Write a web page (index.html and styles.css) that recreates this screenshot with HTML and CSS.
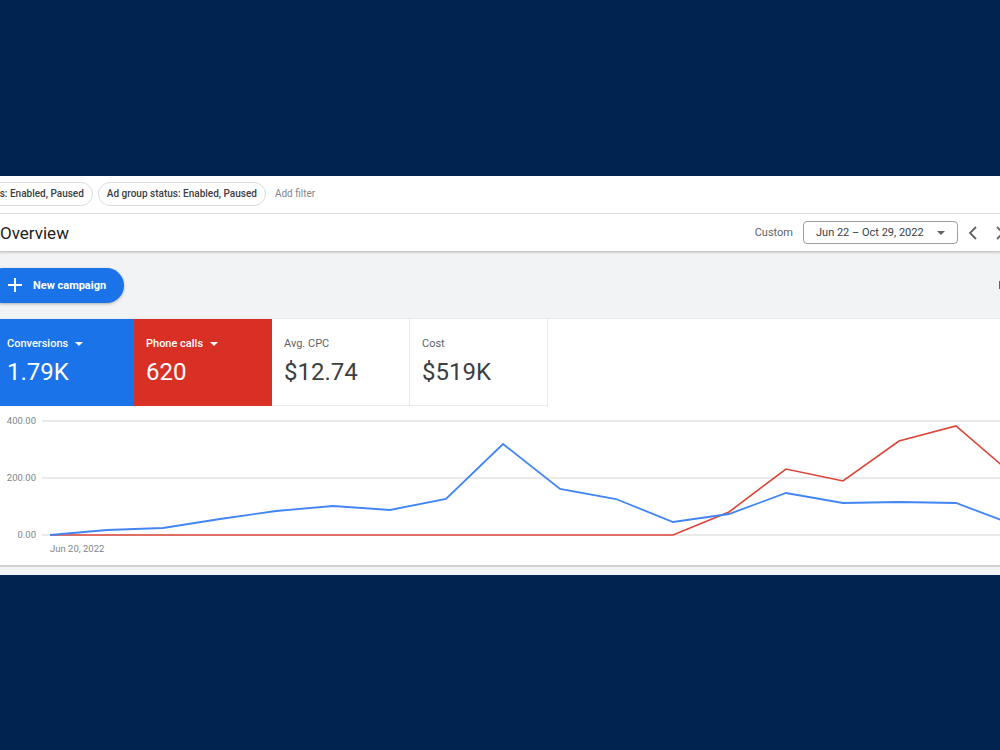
FILE: index.html
```html
<!DOCTYPE html>
<html lang="en">
<head>
  <meta charset="UTF-8">
  <title>Overview</title>
  <link rel="stylesheet" href="styles.css">
</head>
<body>
  <div class="panel">
    <div class="filters">
      <span class="chip">Campaign status: Enabled, Paused</span>
      <span class="chip">Ad group status: Enabled, Paused</span>
      <span class="add-filter">Add filter</span>
    </div>

    <div class="header">
      <h1>Overview</h1>
      <div class="range">
        <span class="custom">Custom</span>
        <div class="date-box">
          <span>Jun 22 – Oct 29, 2022</span>
          <span class="caret"></span>
        </div>
        <svg class="nav" width="24" height="24" viewBox="0 0 24 24"><path d="M15 6l-6 6 6 6" fill="none" stroke="#5f6368" stroke-width="1.8"/></svg>
        <svg class="nav" width="24" height="24" viewBox="0 0 24 24"><path d="M9 6l6 6-6 6" fill="none" stroke="#5f6368" stroke-width="1.8"/></svg>
      </div>
    </div>

    <div class="toolbar">
      <button class="new-btn">
        <svg width="14" height="14" viewBox="0 0 14 14"><path d="M7 0v14M0 7h14" stroke="#fff" stroke-width="2"/></svg>
        New campaign
      </button>
      <span class="edge-mark"></span>
    </div>

    <div class="cards">
      <div class="card blue">
        <div class="label">Conversions <span class="caret white"></span></div>
        <div class="value">1.79K</div>
      </div>
      <div class="card red">
        <div class="label">Phone calls <span class="caret white"></span></div>
        <div class="value">620</div>
      </div>
      <div class="card plain">
        <div class="label">Avg. CPC</div>
        <div class="value">$12.74</div>
      </div>
      <div class="card plain">
        <div class="label">Cost</div>
        <div class="value">$519K</div>
      </div>
    </div>

    <div class="chart">
      <svg width="1000" height="159" viewBox="0 0 1000 159">
        <g stroke="#e3e3e3" stroke-width="1.5">
          <line x1="42" y1="15" x2="1000" y2="15"/>
          <line x1="42" y1="72" x2="1000" y2="72"/>
          <line x1="42" y1="129" x2="1000" y2="129"/>
        </g>
        <g class="axis">
          <text x="36" y="18" text-anchor="end">400.00</text>
          <text x="36" y="75" text-anchor="end">200.00</text>
          <text x="36" y="132" text-anchor="end">0.00</text>
          <text x="50" y="145.5">Jun 20, 2022</text>
        </g>
        <polyline fill="none" stroke="#db4437" stroke-width="1.6"
          points="50,129 107,129 163,129 220,129 276,129 333,129 390,129 446,129 503,129 560,129 616,129 673,129 729,106 786,63 843,75 899,35 956,20 1012,68"/>
        <polyline fill="none" stroke="#4285f4" stroke-width="1.8"
          points="50,129 107,124 163,122 220,113 276,105 333,100 390,104 446,93 503,38 560,83 616,93 673,116 729,108 786,87 843,97 899,96 956,97 1012,118"/>
      </svg>
    </div>

    <div class="bottom"></div>
  </div>
</body>
</html>
```

FILE: styles.css
```css
body {
  margin: 0;
  padding-top: 176px;
  height: 750px;
  box-sizing: border-box;
  background: #00234f;
  font-family: Roboto, "Liberation Sans", sans-serif;
  color: #202124;
  overflow: hidden;
}

.panel {
  background: #fff;
  width: 1000px;
  overflow: hidden;
}

.filters {
  display: flex;
  align-items: center;
  gap: 5px;
  height: 35px;
  padding-bottom: 2px;
  margin-left: -80px;
  border-bottom: 1px solid #e0e0e0;
}

.chip {
  display: inline-flex;
  align-items: center;
  height: 22px;
  padding: 0 8px;
  border: 1px solid #dadce0;
  border-radius: 12px;
  font-size: 10px;
  font-weight: 500;
  color: #3c4043;
  white-space: nowrap;
}

.add-filter {
  margin-left: 4px;
  font-size: 10px;
  color: #80868b;
}

.header {
  display: flex;
  align-items: center;
  justify-content: space-between;
  height: 37px;
  border-bottom: 1px solid #c8c8c8;
  box-shadow: 0 1px 2px rgba(0, 0, 0, 0.15);
  position: relative;
}

h1 {
  margin: 0;
  font-size: 17px;
  font-weight: 400;
  color: #202124;
}

.range {
  display: flex;
  align-items: center;
  margin-right: -12px;
}

.custom {
  font-size: 11px;
  color: #5f6368;
  margin-right: 10px;
}

.date-box {
  display: flex;
  align-items: center;
  justify-content: space-between;
  width: 155px;
  height: 23px;
  box-sizing: border-box;
  padding: 0 12px;
  border: 1px solid #9aa0a6;
  border-radius: 4px;
  font-size: 11px;
  color: #3c4043;
}

.caret {
  display: inline-block;
  width: 0;
  height: 0;
  border-left: 4px solid transparent;
  border-right: 4px solid transparent;
  border-top: 4px solid #5f6368;
}

.caret.white {
  border-top-color: #fff;
  margin-left: 4px;
  vertical-align: middle;
}

.nav {
  margin-left: 3px;
}

.toolbar {
  display: flex;
  align-items: center;
  justify-content: space-between;
  height: 66px;
  background: #f1f3f4;
}

.new-btn {
  display: flex;
  align-items: center;
  gap: 11px;
  height: 35px;
  margin-left: -14px;
  padding: 0 18px 0 22px;
  border: none;
  border-radius: 18px;
  background: #1a73e8;
  color: #fff;
  font-family: Roboto, "Liberation Sans", sans-serif;
  font-size: 11px;
  font-weight: 700;
  box-shadow: 0 1px 3px rgba(0, 0, 0, 0.3);
}

.edge-mark {
  width: 3px;
  height: 8px;
  background: #5f6368;
  margin-right: -2px;
}

.cards {
  display: flex;
  height: 87px;
  margin-left: -5px;
  border-top: 1px solid #e8eaed;
}

.card {
  width: 138px;
  box-sizing: border-box;
  padding: 18px 12px 0;
}

.card.blue {
  width: 139px;
  background: #1a73e8;
  color: #fff;
}

.card.red {
  background: #d93025;
  color: #fff;
}

.card.plain {
  border-right: 1px solid #e8eaed;
  border-bottom: 1px solid #e8eaed;
  color: #3c4043;
}

.label {
  font-size: 11px;
  font-weight: 500;
  height: 16px;
}

.card.plain .label {
  font-weight: 400;
  color: #5f6368;
}

.value {
  margin-top: 5px;
  font-size: 24px;
  font-weight: 400;
}

.chart {
  height: 159px;
}

.chart svg {
  display: block;
}

.axis text {
  font-family: Roboto, "Liberation Sans", sans-serif;
  font-size: 9.5px;
  fill: #80868b;
}

.bottom {
  height: 8px;
  border-top: 2px solid #d0d0d0;
  background: #f1f3f4;
}
```
